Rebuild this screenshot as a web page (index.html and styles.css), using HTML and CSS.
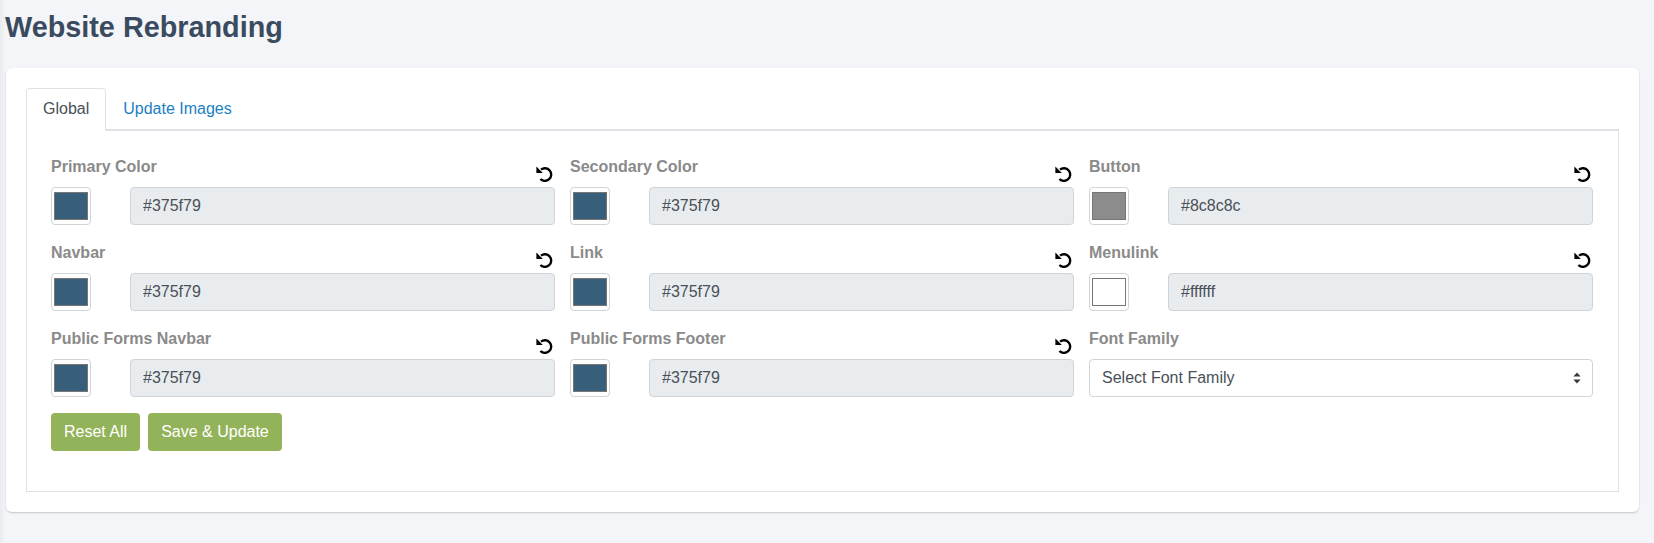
FILE: index.html
```html
<!DOCTYPE html>
<html lang="en">
<head>
<meta charset="utf-8">
<title>Website Rebranding</title>
<link rel="stylesheet" href="styles.css">
</head>
<body>
<h1 class="title">Website Rebranding</h1>
<main class="card">
  <nav class="tabs">
    <a class="tab active">Global</a>
    <a class="tab">Update Images</a>
  </nav>
  <section class="pane">
    <div class="grid">
      <div class="field">
        <div class="field-head"><label>Primary Color</label><svg class="reset" viewBox="0 0 17 16"><path d="M4.4 13A6.3 6.3 0 1 0 5 3.6"/><path class="tip" d="M.4 .6V7h6.4z"/></svg></div>
        <div class="color-row"><span class="swatch"><i class="chip blue"></i></span><input class="hex" value="#375f79" readonly></div>
      </div>
      <div class="field">
        <div class="field-head"><label>Secondary Color</label><svg class="reset" viewBox="0 0 17 16"><path d="M4.4 13A6.3 6.3 0 1 0 5 3.6"/><path class="tip" d="M.4 .6V7h6.4z"/></svg></div>
        <div class="color-row"><span class="swatch"><i class="chip blue"></i></span><input class="hex" value="#375f79" readonly></div>
      </div>
      <div class="field">
        <div class="field-head"><label>Button</label><svg class="reset" viewBox="0 0 17 16"><path d="M4.4 13A6.3 6.3 0 1 0 5 3.6"/><path class="tip" d="M.4 .6V7h6.4z"/></svg></div>
        <div class="color-row"><span class="swatch"><i class="chip grey"></i></span><input class="hex" value="#8c8c8c" readonly></div>
      </div>
      <div class="field">
        <div class="field-head"><label>Navbar</label><svg class="reset" viewBox="0 0 17 16"><path d="M4.4 13A6.3 6.3 0 1 0 5 3.6"/><path class="tip" d="M.4 .6V7h6.4z"/></svg></div>
        <div class="color-row"><span class="swatch"><i class="chip blue"></i></span><input class="hex" value="#375f79" readonly></div>
      </div>
      <div class="field">
        <div class="field-head"><label>Link</label><svg class="reset" viewBox="0 0 17 16"><path d="M4.4 13A6.3 6.3 0 1 0 5 3.6"/><path class="tip" d="M.4 .6V7h6.4z"/></svg></div>
        <div class="color-row"><span class="swatch"><i class="chip blue"></i></span><input class="hex" value="#375f79" readonly></div>
      </div>
      <div class="field">
        <div class="field-head"><label>Menulink</label><svg class="reset" viewBox="0 0 17 16"><path d="M4.4 13A6.3 6.3 0 1 0 5 3.6"/><path class="tip" d="M.4 .6V7h6.4z"/></svg></div>
        <div class="color-row"><span class="swatch"><i class="chip white"></i></span><input class="hex" value="#ffffff" readonly></div>
      </div>
      <div class="field">
        <div class="field-head"><label>Public Forms Navbar</label><svg class="reset" viewBox="0 0 17 16"><path d="M4.4 13A6.3 6.3 0 1 0 5 3.6"/><path class="tip" d="M.4 .6V7h6.4z"/></svg></div>
        <div class="color-row"><span class="swatch"><i class="chip blue"></i></span><input class="hex" value="#375f79" readonly></div>
      </div>
      <div class="field">
        <div class="field-head"><label>Public Forms Footer</label><svg class="reset" viewBox="0 0 17 16"><path d="M4.4 13A6.3 6.3 0 1 0 5 3.6"/><path class="tip" d="M.4 .6V7h6.4z"/></svg></div>
        <div class="color-row"><span class="swatch"><i class="chip blue"></i></span><input class="hex" value="#375f79" readonly></div>
      </div>
      <div class="field">
        <div class="field-head"><label>Font Family</label></div>
        <div class="select-wrap">
          <select class="select"><option>Select Font Family</option></select>
          <svg class="caret" viewBox="0 0 8 12"><path d="M4 .5 7.6 4.6H.4zM4 11.5.4 7.4h7.2z"/></svg>
        </div>
      </div>
    </div>
    <div class="actions">
      <button class="btn" type="button">Reset All</button>
      <button class="btn" type="button">Save &amp; Update</button>
    </div>
  </section>
</main>
</body>
</html>
```
FILE: styles.css
```css
* { box-sizing: border-box; }
html, body { height: 100%; }
body {
  margin: 0;
  padding: 0 15px 0 6px;
  background: linear-gradient(90deg, #e9ebef 0, #f3f5f9 6px);
  font-family: "Liberation Sans", Arial, sans-serif;
  font-size: 16px;
  color: #495057;
  overflow: hidden;
}
.title {
  margin: 0 0 0 -1px;
  padding-top: 10px;
  height: 68px;
  font-size: 28.8px;
  line-height: 34px;
  font-weight: 700;
  color: #3a4b60;
}
.card {
  height: 444px;
  padding: 20px;
  background: #fff;
  border-radius: 6px;
  box-shadow: 0 1px 2px rgba(0, 0, 0, .2);
}
.tabs { display: flex; height: 43px; border-bottom: 2px solid #dee2e6; }
.tab {
  height: 43px;
  padding: 9px 16px;
  font-size: 16px;
  line-height: 22px;
  color: #1a7fc4;
  border: 1px solid transparent;
  border-radius: 4px 4px 0 0;
}
.tab.active {
  color: #495057;
  background: #fff;
  border-color: #dee2e6 #dee2e6 #fff;
}
.pane {
  height: 361px;
  padding: 25px 25px 0 24px;
  border: 1px solid #dee2e6;
  border-top: 0;
}
.grid { display: grid; grid-template-columns: repeat(3, 1fr); column-gap: 15px; row-gap: 17px; }
.field-head { display: flex; justify-content: space-between; height: 31px; }
label { font-size: 16px; font-weight: 700; line-height: 22px; color: #8a8a8a; }
.reset { width: 17px; height: 16px; margin: 10px 2px 0 0; flex: none; }
.reset path { fill: none; stroke: #000; stroke-width: 2.4; }
.reset path.tip { fill: #000; stroke: none; }
.color-row { display: grid; grid-template-columns: 40px 1fr; column-gap: 39px; }
.swatch {
  display: block;
  height: 38px;
  padding: 4px 2px;
  background: #fff;
  border: 1px solid #ced4da;
  border-radius: 4px;
}
.chip { display: block; height: 100%; border: 1px solid #767676; }
.blue { background: #375f79; }
.grey { background: #8c8c8c; }
.white { background: #fff; }
.hex, .select {
  display: block;
  width: 100%;
  height: 38px;
  padding: 6px 12px;
  font: 16px/24px "Liberation Sans", Arial, sans-serif;
  color: #495057;
  border: 1px solid #ced4da;
  border-radius: 4px;
  outline: 0;
}
.hex { background: #e9ecef; }
.select-wrap { position: relative; }
.select { appearance: none; background: #fff; }
.caret { position: absolute; top: 13px; right: 12px; width: 8px; height: 12px; fill: #343a40; }
.actions { display: flex; gap: 8px; margin-top: 16px; }
.btn {
  height: 38px;
  padding: 6px 13px;
  font: 16px/24px "Liberation Sans", Arial, sans-serif;
  color: #fff;
  background: #93b35a;
  border: 0;
  border-radius: 4px;
}
```
